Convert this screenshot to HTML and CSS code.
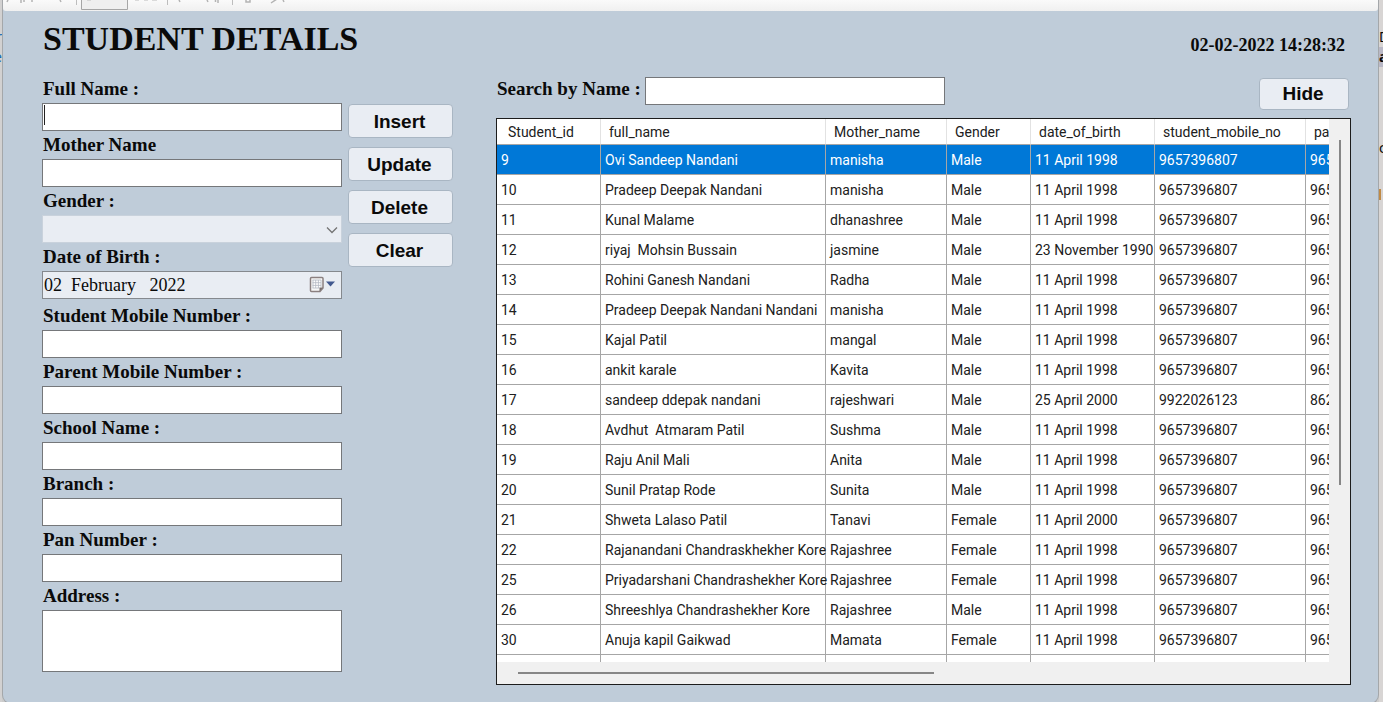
FILE: index.html
```html
<!DOCTYPE html>
<html lang="en">
<head>
<meta charset="utf-8">
<title>Student Details</title>
<link rel="stylesheet" href="styles.css">
</head>
<body>
<div class="desktop">
  <aside class="edge edge-left"><span class="frag link first">r</span><span class="frag link">te</span></aside>
  <div class="window">
    <div class="toolbar">
      <svg width="300" height="11" viewBox="0 0 300 11" aria-hidden="true" fill="none" stroke="#b4b4b4" stroke-width="1.5">
        <path d="M5 0l-1 2M18 0v3M21 0v2M29 0v2M57 0l1 2M176 0l1 2M204 0l1 2M212.500 0v2M215 0v3M243 0v2h4v-2M268 3l6-4M280 0l1 2" />
        <path d="M73.5 0v5M164.5 0v5M229.5 0v5" stroke="#bdbdbd" stroke-width="1" />
        <path d="M78.5 0v9.500h46v-9.500" stroke="#a6a6a6" fill="#efefef" stroke-width="1" />
        <path d="M84 0h4M132 0h4M141 0h4M149 0h5" stroke="#cfcfcf" />
      </svg>
    </div>
    <main class="panel">
      <header class="head">
        <h1>STUDENT DETAILS</h1>
        <time class="clock">02-02-2022 14:28:32</time>
      </header>
      <div class="content">
        <form class="entry">
          <div class="fields">
            <label for="name">Full Name :</label>
            <div class="control"><input class="box" id="name" type="text"><span class="caret"></span></div>
            <label for="mother">Mother Name</label>
            <input class="box" id="mother" type="text">
            <label for="gender">Gender :</label>
            <div class="control">
              <select class="box flat" id="gender"><option></option><option>Male</option><option>Female</option></select>
              <svg class="icon" width="12" height="8" viewBox="0 0 12 8" fill="none" stroke="#747474" stroke-width="1.300"><path d="M1 1.500l5 5 5-5"/></svg>
            </div>
            <label for="dob">Date of Birth :</label>
            <div class="control date">
              <input class="box flat lined" id="dob" type="text" value="02  February   2022">
              <svg class="icon" width="27" height="17" viewBox="0 0 27 17">
                <path d="M2.500 1.500h10.500q1 0 1 1v9.500l-3 3.500h-8.500q-1 0-1-1v-12q0-1 1-1z" fill="#f8f8f8" stroke="#8b8080" stroke-width="1.500"/>
                <path d="M3.500 4h8.500v8h-8.500z" fill="#fff"/>
                <path d="M3.500 4h8.500M3.500 6.700h8.500M3.500 9.400h8.500M3.500 12h7M4 4v8M6.700 4v8M9.400 4v8M12 4v7" stroke="#b3b8c2" stroke-width=".8"/>
                <path d="M14 11.500l-3.500 4v-4z" fill="#776d6d"/>
                <path d="M17 5.500h9l-4.500 5z" fill="#42598f"/>
              </svg>
            </div>
            <label for="smobile">Student Mobile Number :</label>
            <input class="box" id="smobile" type="text">
            <label for="pmobile">Parent Mobile Number :</label>
            <input class="box" id="pmobile" type="text">
            <label for="school">School Name :</label>
            <input class="box" id="school" type="text">
            <label for="branch">Branch :</label>
            <input class="box" id="branch" type="text">
            <label for="pan">Pan Number :</label>
            <input class="box" id="pan" type="text">
            <label for="address">Address :</label>
            <textarea class="box area" id="address"></textarea>
          </div>
          <div class="actions">
            <button type="button">Insert</button>
            <button type="button">Update</button>
            <button type="button">Delete</button>
            <button type="button">Clear</button>
          </div>
        </form>
        <section class="records">
          <div class="search">
            <label for="search">Search by Name :</label>
            <input class="box" id="search" type="text">
            <button type="button" class="hide">Hide</button>
          </div>
          <div class="grid">
            <div class="view">
              <table>
                <colgroup><col class="c-id"><col class="c-name"><col class="c-mother"><col class="c-gender"><col class="c-dob"><col class="c-mobile"><col class="c-mobile"></colgroup>
                <thead><tr><th>Student_id</th><th>full_name</th><th>Mother_name</th><th>Gender</th><th>date_of_birth</th><th>student_mobile_no</th><th>parent_mobile_no</th></tr></thead>
                <tbody>
                  <tr class="selected"><td>9</td><td>Ovi Sandeep Nandani</td><td>manisha</td><td>Male</td><td>11 April 1998</td><td>9657396807</td><td>9657396807</td></tr>
                  <tr><td>10</td><td>Pradeep Deepak Nandani</td><td>manisha</td><td>Male</td><td>11 April 1998</td><td>9657396807</td><td>9657396807</td></tr>
                  <tr><td>11</td><td>Kunal Malame</td><td>dhanashree</td><td>Male</td><td>11 April 1998</td><td>9657396807</td><td>9657396807</td></tr>
                  <tr><td>12</td><td>riyaj  Mohsin Bussain</td><td>jasmine</td><td>Male</td><td>23 November 1990</td><td>9657396807</td><td>9657396807</td></tr>
                  <tr><td>13</td><td>Rohini Ganesh Nandani</td><td>Radha</td><td>Male</td><td>11 April 1998</td><td>9657396807</td><td>9657396807</td></tr>
                  <tr><td>14</td><td>Pradeep Deepak Nandani Nandani</td><td>manisha</td><td>Male</td><td>11 April 1998</td><td>9657396807</td><td>9657396807</td></tr>
                  <tr><td>15</td><td>Kajal Patil</td><td>mangal</td><td>Male</td><td>11 April 1998</td><td>9657396807</td><td>9657396807</td></tr>
                  <tr><td>16</td><td>ankit karale</td><td>Kavita</td><td>Male</td><td>11 April 1998</td><td>9657396807</td><td>9657396807</td></tr>
                  <tr><td>17</td><td>sandeep ddepak nandani</td><td>rajeshwari</td><td>Male</td><td>25 April 2000</td><td>9922026123</td><td>8623000000</td></tr>
                  <tr><td>18</td><td>Avdhut  Atmaram Patil</td><td>Sushma</td><td>Male</td><td>11 April 1998</td><td>9657396807</td><td>9657396807</td></tr>
                  <tr><td>19</td><td>Raju Anil Mali</td><td>Anita</td><td>Male</td><td>11 April 1998</td><td>9657396807</td><td>9657396807</td></tr>
                  <tr><td>20</td><td>Sunil Pratap Rode</td><td>Sunita</td><td>Male</td><td>11 April 1998</td><td>9657396807</td><td>9657396807</td></tr>
                  <tr><td>21</td><td>Shweta Lalaso Patil</td><td>Tanavi</td><td>Female</td><td>11 April 2000</td><td>9657396807</td><td>9657396807</td></tr>
                  <tr><td>22</td><td>Rajanandani Chandraskhekher Kore</td><td>Rajashree</td><td>Female</td><td>11 April 1998</td><td>9657396807</td><td>9657396807</td></tr>
                  <tr><td>25</td><td>Priyadarshani Chandrashekher Kore</td><td>Rajashree</td><td>Female</td><td>11 April 1998</td><td>9657396807</td><td>9657396807</td></tr>
                  <tr><td>26</td><td>Shreeshlya Chandrashekher Kore</td><td>Rajashree</td><td>Male</td><td>11 April 1998</td><td>9657396807</td><td>9657396807</td></tr>
                  <tr><td>30</td><td>Anuja kapil Gaikwad</td><td>Mamata</td><td>Female</td><td>11 April 1998</td><td>9657396807</td><td>9657396807</td></tr>
                  <tr><td></td><td></td><td></td><td></td><td></td><td></td><td></td></tr>
                </tbody>
              </table>
            </div>
            <div class="vbar"><div class="vthumb"></div></div>
            <div class="hbar"><div class="hthumb"></div></div>
          </div>
        </section>
      </div>
    </main>
  </div>
  <aside class="edge edge-right"><span class="frag first">D</span><span class="frag mark">a</span><span class="frag low">c</span><span class="tick"></span></aside>
</div>
</body>
</html>
```
FILE: styles.css
```css
* { box-sizing: border-box; }
body {
  margin: 0;
  background: #cbcbcb;
  color: #0a0a0a;
  font-family: "Liberation Serif", serif;
}
.desktop {
  display: grid;
  grid-template-columns: 2px minmax(0, 1fr) 4px;
  min-height: 100vh;
}
.edge {
  display: flex;
  flex-direction: column;
  overflow: hidden;
  font: 14px/20px "Noto Sans", sans-serif;
  background: #d2d1d1;
}
.edge-right { background: #d8d5d4; }
.frag { height: 20px; direction: rtl; overflow: hidden; }
.edge-right .frag { direction: ltr; }
.first { margin-top: 27px; }
.link { color: #1268b3; }
.mark { background: #b9b8c6; font-weight: bold; }
.low { margin-top: 71px; }
.tick { height: 11px; width: 2px; margin-top: 31px; background: #c08a45; }
.window {
  display: flex;
  flex-direction: column;
  border: 1px solid #a4a7aa;
  border-top: 0;
  border-radius: 0 0 9px 9px;
  overflow: hidden;
  background: #bfccd9;
}
.toolbar {
  height: 11px;
  background: linear-gradient(#fafafa, #f0f0f0);
  border-radius: 0 0 3px 3px;
}
.toolbar svg { display: block; }
.panel {
  flex: 1;
  display: flex;
  flex-direction: column;
  padding: 0 27px 18px 39px;
}
.head {
  height: 64px;
  display: flex;
  justify-content: space-between;
  padding: 8px 6px 0 1px;
}
h1 { margin: 0; font-size: 34px; line-height: 40px; }
.clock { font-size: 18px; font-weight: bold; line-height: 20px; padding-top: 16px; }
.content { flex: 1; display: flex; gap: 43px; }
.entry { display: flex; gap: 6px; padding-bottom: 13px; }
.fields { width: 300px; display: flex; flex-direction: column; }
label {
  font-size: 19px;
  font-weight: bold;
  line-height: 28px;
  padding-left: 1px;
  white-space: nowrap;
}
.box {
  display: block;
  width: 100%;
  height: 28px;
  margin: 0;
  padding: 0 1px;
  border: 1px solid #75777a;
  border-radius: 0;
  background: #fff;
  color: #0a0a0a;
  font: 18px "Liberation Serif", serif;
  outline: 0;
}
.flat { appearance: none; background: #e9edf3; border-color: #c9d2dc; }
.lined { border-color: #85898e; }
.area { height: 62px; resize: none; }
.control { position: relative; }
.date { margin-bottom: 3px; }
.icon { position: absolute; right: 4px; top: 11px; }
.date .icon { right: 6px; top: 5px; }
.caret { position: absolute; left: 2px; top: 2px; width: 1px; height: 20px; background: #222; }
.actions { display: flex; flex-direction: column; gap: 9px; padding-top: 29px; }
button {
  width: 105px;
  height: 34px;
  padding: 2px 2px 0 0;
  border: 1px solid #a9b6c3;
  border-radius: 4px;
  background: #e9edf3;
  color: #0a0a0a;
  font: bold 19px "Liberation Sans", sans-serif;
}
.records { flex: 1; min-width: 0; display: flex; flex-direction: column; }
.search { display: flex; padding: 2px 2px 8px 0; }
.search label { width: 149px; line-height: 24px; }
.search .box { width: 300px; }
.hide { width: 90px; height: 32px; margin: 1px 0 0 auto; padding: 0 2px 0 0; }
.grid {
  flex: 1;
  display: grid;
  grid-template: minmax(0, 1fr) 22px / minmax(0, 1fr) 21px;
  border: 1px solid #1c1c1c;
  background: #f0f0f0;
}
.view { overflow: hidden; contain: size; background: #fff; }
table {
  table-layout: fixed;
  width: 960px;
  border-spacing: 0;
  font: 14px "Roboto", sans-serif;
  color: #202020;
}
.c-id { width: 104px; }
.c-name { width: 225px; }
.c-mother { width: 121px; }
.c-gender { width: 84px; }
.c-dob { width: 124px; }
.c-mobile { width: 151px; }
th, td {
  padding: 0 0 0 4px;
  text-align: left;
  white-space: pre;
  border-right: 1px solid #a6a6a6;
  border-bottom: 1px solid #a6a6a6;
}
th { height: 26px; padding-left: 8px; font-weight: normal; border-right-color: #e2e2e2; }
th:first-child { padding-left: 11px; }
td { height: 30px; }
.selected td { background: #0078d7; color: #fff; }
.vbar { padding: 21px 0 0 10px; }
.vthumb { width: 2px; height: 66%; background: #868686; }
.hbar { grid-column: 1 / -1; padding: 10px 0 0 21px; }
.hthumb { width: 50%; height: 2px; background: #868686; }
```
